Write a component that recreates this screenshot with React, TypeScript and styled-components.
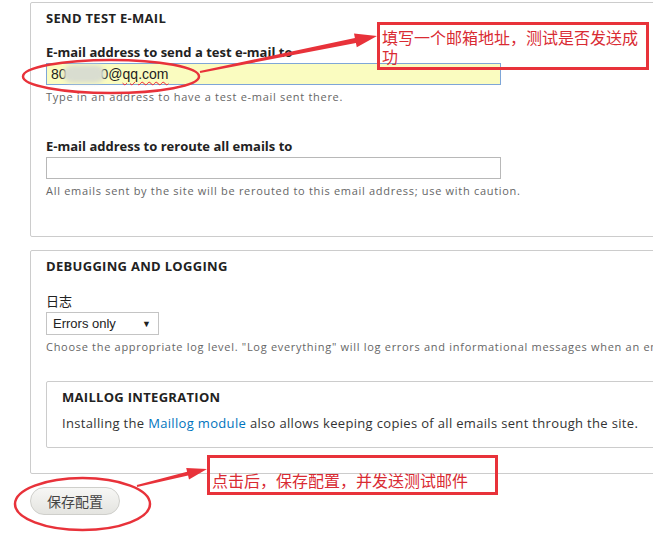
import React from 'react';
import styled, { createGlobalStyle } from 'styled-components';

const GlobalStyle = createGlobalStyle`
  html, body {
    margin: 0;
    padding: 0;
    background: #fff;
    overflow: hidden;
  }
  body {
    font-family: "Open Sans", "Noto Sans CJK SC", sans-serif;
    color: #222;
  }
`;

const Page = styled.div`
  position: relative;
  width: 653px;
  height: 549px;
  overflow: hidden;
  padding: 2px 0 0 30px;
  box-sizing: border-box;
`;

const Fieldset = styled.section<{ $inner?: boolean; $pb?: number }>`
  width: ${(p) => (p.$inner ? '640px' : '660px')};
  border: 1px solid #ccc;
  border-radius: 2px;
  background: #fff;
  box-sizing: border-box;
  padding: 7px 15px ${(p) => p.$pb ?? 38}px;
  margin-bottom: ${(p) => (p.$inner ? 0 : 13)}px;
`;

const Heading = styled.h2`
  margin: 0;
  font-size: 13px;
  line-height: 16px;
  font-weight: 700;
  letter-spacing: 0.3px;
  text-transform: uppercase;
  color: #222;
`;

const Field = styled.div<{ $gap?: number }>`
  margin-top: ${(p) => p.$gap ?? 19}px;
  display: flex;
  flex-direction: column;
  align-items: flex-start;
`;

const Label = styled.label<{ $plain?: boolean }>`
  font-size: 13px;
  line-height: 14px;
  font-weight: ${(p) => (p.$plain ? 400 : 700)};
  color: #222;
  margin-bottom: 4px;
  font-family: "Open Sans", "Noto Sans CJK SC", sans-serif;
`;

const TextBox = styled.div<{ $filled?: boolean }>`
  width: 455px;
  height: 22px;
  box-sizing: border-box;
  border: 1px solid ${(p) => (p.$filled ? '#7ea6d8' : '#b8b8b8')};
  background: ${(p) => (p.$filled ? '#fafcc0' : '#fff')};
  font-family: "Liberation Sans", Arial, sans-serif;
  font-size: 14px;
  line-height: 20px;
  padding: 0 4px;
  color: #222;
  display: flex;
  align-items: center;
  white-space: nowrap;
`;

const Smudge = styled.span`
  display: inline-block;
  width: 42px;
  height: 18px;
  margin: 0 -4px;
  border-radius: 9px;
  background: #d9ddd0;
  filter: blur(2px);
`;

const Misspelt = styled.span`
  text-decoration: underline wavy #e23;
  text-underline-offset: 2px;
  text-decoration-thickness: 1px;
`;

const Desc = styled.div`
  margin-top: 5px;
  font-size: 11px;
  line-height: 14px;
  letter-spacing: 0.7px;
  color: #666;
  white-space: nowrap;
`;

const Select = styled.div`
  width: 113px;
  height: 23px;
  box-sizing: border-box;
  border: 1px solid #c4c4c4;
  background: #fff;
  display: flex;
  align-items: center;
  justify-content: space-between;
  padding: 0 7px 0 6px;
  font-family: "Liberation Sans", Arial, sans-serif;
  font-size: 13px;
  color: #222;
`;

const Caret = styled.span`
  font-size: 9px;
  color: #222;
`;

const InnerWrap = styled.div`
  margin-top: 27px;
`;

const Para = styled.p`
  margin: 11px 0 0;
  font-size: 13px;
  line-height: 14px;
  color: #333;
  white-space: nowrap;
  letter-spacing: 0.33px;
`;

const Link = styled.a`
  color: #0074bd;
  text-decoration: none;
`;

const Button = styled.button`
  width: 90px;
  height: 28px;
  border: 1px solid #cfcfcb;
  border-radius: 16px;
  background: linear-gradient(#f7f7f5, #e4e4e0);
  color: #444;
  font-family: "Noto Sans CJK SC", sans-serif;
  font-size: 14px;
  padding: 0;
`;

const Note = styled.div<{ $x: number; $y: number; $w: number; $h: number; $pt: number }>`
  position: absolute;
  left: ${(p) => p.$x}px;
  top: ${(p) => p.$y}px;
  width: ${(p) => p.$w}px;
  height: ${(p) => p.$h}px;
  box-sizing: border-box;
  border: 3px solid #e8323a;
  padding: ${(p) => p.$pt}px 0 0 2px;
  color: #d92b33;
  font-family: "Noto Sans CJK SC", sans-serif;
  font-size: 16px;
  line-height: 19px;
`;

const Overlay = styled.svg`
  position: absolute;
  left: 0;
  top: 0;
  pointer-events: none;
`;

export default function App() {
  return (
    <>
      <GlobalStyle />
      <Page>
        <Fieldset>
          <Heading>Send test e-mail</Heading>
          <Field>
            <Label>E-mail address to send a test e-mail to</Label>
            <TextBox $filled>
              80<Smudge />0@<Misspelt>qq.com</Misspelt>
            </TextBox>
            <Desc>Type in an address to have a test e-mail sent there.</Desc>
          </Field>
          <Field $gap={35}>
            <Label>E-mail address to reroute all emails to</Label>
            <TextBox />
            <Desc>All emails sent by the site will be rerouted to this email address; use with caution.</Desc>
          </Field>
        </Fieldset>

        <Fieldset $pb={25}>
          <Heading>Debugging and logging</Heading>
          <Field $gap={20}>
            <Label $plain>日志</Label>
            <Select>
              Errors only <Caret>▼</Caret>
            </Select>
            <Desc>
              Choose the appropriate log level. "Log everything" will log errors and informational messages when an email
              is sent.
            </Desc>
          </Field>
          <InnerWrap>
            <Fieldset $inner $pb={17}>
              <Heading>Maillog integration</Heading>
              <Para>
                Installing the <Link href="#">Maillog module</Link> also allows keeping copies of all emails sent through
                the site.
              </Para>
            </Fieldset>
          </InnerWrap>
        </Fieldset>

        <Button>保存配置</Button>

        <Overlay width="653" height="549" viewBox="0 0 653 549">
          <ellipse cx="111" cy="76.5" rx="88" ry="16.5" fill="none" stroke="#e8323a" strokeWidth="2.5" />
          <ellipse cx="82.5" cy="504" rx="67.5" ry="26" fill="none" stroke="#e8323a" strokeWidth="2.5" />
          <polygon
            points="200.2,73 355.9,42.9 356.8,47.3 377,36 354,33.5 354.9,38 199.8,71"
            fill="#e8323a"
          />
          <polygon
            points="137.2,487 188.1,475.6 189,479.5 207,469 186.2,467.9 187.1,471.8 136.8,485"
            fill="#e8323a"
          />
        </Overlay>

        <Note $x={377} $y={22} $w={272} $h={48} $pt={3}>
          填写一个邮箱地址，测试是否发送成功
        </Note>
        <Note $x={207} $y={455} $w={291} $h={40} $pt={13}>
          点击后，保存配置，并发送测试邮件
        </Note>
      </Page>
    </>
  );
}
